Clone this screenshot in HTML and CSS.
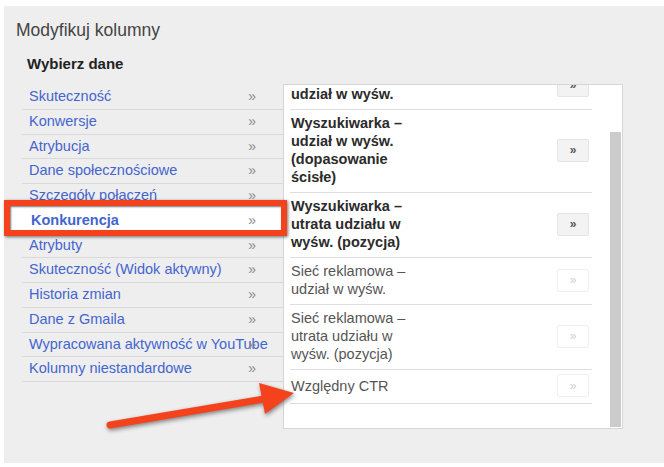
FILE: index.html
```html
<!DOCTYPE html>
<html lang="pl">
<head>
<meta charset="utf-8">
<title>Modyfikuj kolumny</title>
<link rel="stylesheet" href="styles.css">
</head>
<body>
<div class="page">
  <div class="panel">
    <h1 class="title">Modyfikuj kolumny</h1>
    <h2 class="subtitle">Wybierz dane</h2>
    <div class="body">
      <ul class="cats">
        <li class="cat"><span class="cat-name">Skuteczność</span><span class="cat-arrow">»</span></li>
        <li class="cat"><span class="cat-name">Konwersje</span><span class="cat-arrow">»</span></li>
        <li class="cat"><span class="cat-name">Atrybucja</span><span class="cat-arrow">»</span></li>
        <li class="cat"><span class="cat-name">Dane społecznościowe</span><span class="cat-arrow">»</span></li>
        <li class="cat"><span class="cat-name">Szczegóły połączeń</span><span class="cat-arrow">»</span></li>
        <li class="cat active"><span class="callout"></span><span class="cat-name">Konkurencja</span><span class="cat-arrow">»</span></li>
        <li class="cat"><span class="cat-name">Atrybuty</span><span class="cat-arrow">»</span></li>
        <li class="cat"><span class="cat-name">Skuteczność (Widok aktywny)</span><span class="cat-arrow">»</span></li>
        <li class="cat"><span class="cat-name">Historia zmian</span><span class="cat-arrow">»</span></li>
        <li class="cat"><span class="cat-name">Dane z Gmaila</span><span class="cat-arrow">»</span></li>
        <li class="cat"><span class="cat-name">Wypracowana aktywność w YouTube</span><span class="cat-arrow">»</span></li>
        <li class="cat"><span class="cat-name">Kolumny niestandardowe</span><span class="cat-arrow">»</span></li>
      </ul>
      <div class="cols">
        <div class="cols-view">
          <ul class="cols-list">
            <li class="col strong"><span class="col-name">Wyszukiwarka – udział w wyśw.</span><span class="add">»</span></li>
            <li class="col strong"><span class="col-name">Wyszukiwarka – udział w wyśw. (dopasowanie ścisłe)</span><span class="add">»</span></li>
            <li class="col strong"><span class="col-name">Wyszukiwarka – utrata udziału w wyśw. (pozycja)</span><span class="add">»</span></li>
            <li class="col"><span class="col-name">Sieć reklamowa – udział w wyśw.</span><span class="add off">»</span></li>
            <li class="col"><span class="col-name">Sieć reklamowa – utrata udziału w wyśw. (pozycja)</span><span class="add off">»</span></li>
            <li class="col"><span class="col-name">Względny CTR</span><span class="add off">»</span></li>
          </ul>
        </div>
        <div class="track"><div class="thumb"></div></div>
      </div>
    </div>
  </div>
  <svg class="arrow" width="664" height="467" viewBox="0 0 664 467" aria-hidden="true">
    <line x1="110" y1="425" x2="264" y2="399" stroke="#f4431c" stroke-width="7" stroke-linecap="round"/>
    <polygon points="259,383 265,414 294,393" fill="#f4431c"/>
  </svg>
</div>
</body>
</html>
```

FILE: styles.css
```css
html, body {
  margin: 0;
  padding: 0;
  background: #ffffff;
}

body {
  font-family: "Liberation Sans", Arial, sans-serif;
}

.page {
  position: relative;
  width: 664px;
  height: 467px;
  overflow: hidden;
}

.panel {
  margin: 6px 0 0 4px;
  height: 457px;
  background: #eeeeee;
  padding: 14px 0 0 12px;
  box-sizing: border-box;
}

.title {
  margin: 0;
  font-weight: normal;
  font-size: 17.5px;
  line-height: 20px;
  color: #444444;
}

.subtitle {
  margin: 15px 0 0 11px;
  font-weight: bold;
  font-size: 15px;
  line-height: 18px;
  color: #222222;
}

.body {
  display: flex;
  align-items: flex-start;
  margin: 10px 0 0 6px;
}

.cats {
  list-style: none;
  margin: 2px 0 0 0;
  padding: 0;
  width: 261px;
  flex: none;
}

.cat {
  display: grid;
  height: 23.75px;
  line-height: 23.75px;
  border-bottom: 1px solid #d9d9d9;
  padding-left: 7px;
  font-size: 14.5px;
  color: #4465cf;
  white-space: nowrap;
}

.cat-name,
.cat-arrow {
  grid-area: 1 / 1;
}

.cat-arrow {
  justify-self: end;
  margin-right: 27px;
  color: #8a8a8a;
  font-size: 14px;
}

.cat.active {
  position: relative;
  background: #ffffff;
  font-weight: bold;
}

.cat.active .cat-name,
.cat.active .cat-arrow {
  position: relative;
  z-index: 2;
}

.cat.active .cat-name {
  margin-left: 2px;
}

.cat.active .cat-arrow {
  font-weight: normal;
}

.callout {
  position: absolute;
  z-index: 1;
  top: -9px;
  bottom: -3px;
  left: -18px;
  right: -4px;
  border: 6px solid #f4431c;
  background: #ffffff;
  box-shadow: 1px 1px 3px rgba(0, 0, 0, 0.55), inset 1px 1px 2px rgba(0, 0, 0, 0.55);
}

.cols {
  display: flex;
  margin-top: 1px;
  width: 340px;
  height: 345px;
  box-sizing: border-box;
  border: 1px solid #d6d6d6;
  background: #ffffff;
  flex: none;
}

.cols-view {
  flex: 1;
  overflow: hidden;
  padding-left: 6px;
}

.cols-list {
  list-style: none;
  margin: -22px 0 0 0;
  padding: 0;
}

.col {
  display: flex;
  align-items: center;
  justify-content: space-between;
  width: 302px;
  box-sizing: border-box;
  padding: 4px 3px 6px 1px;
  border-bottom: 1px solid #dedede;
  font-size: 14.5px;
  line-height: 18px;
  color: #555555;
}

.col.strong {
  font-weight: bold;
  color: #2b2b2b;
}

.col-name {
  width: 125px;
}

.add {
  display: flex;
  align-items: center;
  justify-content: center;
  width: 32px;
  height: 23px;
  box-sizing: border-box;
  border: 1px solid #e4e4e4;
  border-radius: 2px;
  background: #f3f3f3;
  color: #555555;
  font-size: 12px;
  font-weight: bold;
}

.add.off {
  background: #ffffff;
  border-color: #efefef;
  color: #cfcfcf;
  font-weight: normal;
}

.track {
  width: 11px;
  margin-right: 1px;
  flex: none;
}

.thumb {
  margin-top: 47px;
  height: 295px;
  background: #cbcbcb;
}

.arrow {
  position: absolute;
  top: 0;
  left: 0;
  pointer-events: none;
  filter: drop-shadow(1px 2px 2px rgba(0, 0, 0, 0.45));
}
```
